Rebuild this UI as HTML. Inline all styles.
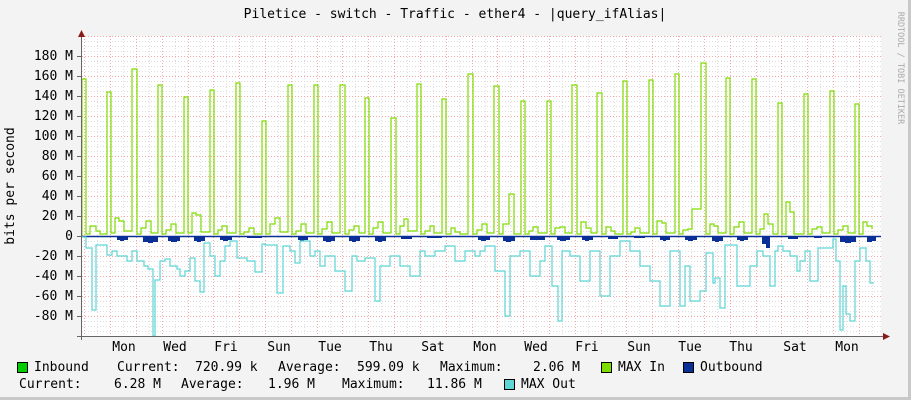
<!DOCTYPE html>
<html><head><meta charset="utf-8"><style>
html,body{margin:0;padding:0;}
body{width:911px;height:400px;overflow:hidden;background:#f3f3f3;position:relative;font-family:"DejaVu Sans Mono","Liberation Mono",monospace;font-size:13px;color:#000;}
.frame{position:absolute;left:0;top:0;width:908px;height:397px;border-right:3px solid #c8c8c8;border-bottom:3px solid #c8c8c8;}
.t{position:absolute;white-space:pre;line-height:14px;}
.sq{position:absolute;width:9px;height:9px;border:1px solid #000;}
</style></head><body>
<div class="frame"></div>
<svg width="911" height="400" style="position:absolute;left:0;top:0" xmlns="http://www.w3.org/2000/svg">
<rect x="82" y="36" width="799" height="300" fill="#fff"/>
<g stroke="#dedede" stroke-width="1" stroke-dasharray="1,2">
<path d="M82,41.5H881M82,46.5H881M82,51.5H881M82,61.5H881M82,66.5H881M82,71.5H881M82,81.5H881M82,86.5H881M82,91.5H881M82,101.5H881M82,106.5H881M82,111.5H881M82,121.5H881M82,126.5H881M82,131.5H881M82,141.5H881M82,146.5H881M82,151.5H881M82,161.5H881M82,166.5H881M82,171.5H881M82,181.5H881M82,186.5H881M82,191.5H881M82,201.5H881M82,206.5H881M82,211.5H881M82,221.5H881M82,226.5H881M82,231.5H881M82,241.5H881M82,246.5H881M82,251.5H881M82,261.5H881M82,266.5H881M82,271.5H881M82,281.5H881M82,286.5H881M82,291.5H881M82,301.5H881M82,306.5H881M82,311.5H881M82,321.5H881M82,326.5H881M82,331.5H881"/>
<path d="M97.5,36V336M123.5,36V336M149.5,36V336M175.5,36V336M200.5,36V336M226.5,36V336M252.5,36V336M278.5,36V336M304.5,36V336M330.5,36V336M355.5,36V336M381.5,36V336M407.5,36V336M433.5,36V336M459.5,36V336M485.5,36V336M510.5,36V336M536.5,36V336M562.5,36V336M588.5,36V336M614.5,36V336M639.5,36V336M665.5,36V336M691.5,36V336M717.5,36V336M743.5,36V336M769.5,36V336M794.5,36V336M820.5,36V336M846.5,36V336M872.5,36V336"/>
</g>
<g stroke="#f4a8a8" stroke-width="1" stroke-dasharray="1,2">
<path d="M82,36.5H881M82,56.5H881M82,76.5H881M82,96.5H881M82,116.5H881M82,136.5H881M82,156.5H881M82,176.5H881M82,196.5H881M82,216.5H881M82,256.5H881M82,276.5H881M82,296.5H881M82,316.5H881"/>
<path d="M84.5,36V336M110.5,36V336M136.5,36V336M162.5,36V336M188.5,36V336M213.5,36V336M239.5,36V336M265.5,36V336M291.5,36V336M317.5,36V336M342.5,36V336M368.5,36V336M394.5,36V336M420.5,36V336M446.5,36V336M472.5,36V336M497.5,36V336M523.5,36V336M549.5,36V336M575.5,36V336M601.5,36V336M626.5,36V336M652.5,36V336M678.5,36V336M704.5,36V336M730.5,36V336M756.5,36V336M781.5,36V336M807.5,36V336M833.5,36V336M859.5,36V336"/>
</g>
<path fill="none" stroke="#7fdc00" stroke-width="1.2" d="M82,236V79H86V234H90V226H96V231H100V234H107V92H111V233H115V218H119V221H124V231H132V69H137V234H141V228H146V221H151V233H158V85H162V234H166V230H171V224H176V233H184V97H188V233H192V213H196V215H201V232H210V90H214V234H218V230H222V226H227V233H236V83H240V234H244V232H249V228H254V234H262V121H266V234H270V224H275V218H280V232H288V85H292V234H296V231H301V224H306V233H314V85H318V234H322V229H327V222H332V233H340V85H345V234H349V230H354V226H359V233H365V98H369V234H373V228H378V222H383V233H391V118H396V234H400V226H404V219H408V231H417V84H421V234H425V231H430V226H434V233H442V99H446V234H451V228H455V232H460V234H468V74H473V234H477V230H482V224H487V233H494V86H499V234H503V224H509V194H514V234H521V101H525V234H529V231H533V227H538V233H547V101H551V234H555V228H560V227H565V233H572V85H577V234H581V222H586V228H591V233H597V93H602V234H606V227H611V231H615V234H623V81H627V234H631V232H635V228H640V233H649V80H653V234H657V221H662V223H666V233H675V74H679V234H683V230H688V229H692V209H696V209H701V63H706V234H710V224H714V226H718V233H726V78H730V234H734V227H739V222H744V233H752V79H756V234H760V229H764V214H768V224H773V234H778V103H782V234H786V202H790V212H794V234H804V94H808V234H812V229H817V227H822V233H830V91H834V234H838V230H843V226H848V233H855V104H859V234H863V222H867V226H872V229"/>
<g fill="#0a2f96">
<path d="M117,236H128V240H124V241H120V240H117Z"/><path d="M143,236H158V242H153V243H148V242H143Z"/><path d="M168,236H180V241H177V242H171V241H168Z"/><path d="M194,236H205V241H201V242H197V241H194Z"/><path d="M220,236H232V240H228V241H223V240H220Z"/><path d="M247,236H262V238H247Z"/><path d="M298,236H308V240H304V241H300V240H298Z"/><path d="M323,236H335V241H331V242H326V241H323Z"/><path d="M349,236H360V241H356V242H352V241H349Z"/><path d="M375,236H386V241H382V242H378V241H375Z"/><path d="M401,236H412V239H401Z"/><path d="M427,236H442V238H427Z"/><path d="M478,236H490V240H486V241H481V240H478Z"/><path d="M503,236H515V241H511V242H506V241H503Z"/><path d="M530,236H545V240H530Z"/><path d="M557,236H570V240H566V241H560V240H557Z"/><path d="M582,236H593V240H589V241H585V240H582Z"/><path d="M608,236H618V239H608Z"/><path d="M634,236H645V238H634Z"/><path d="M660,236H670V240H666V241H663V240H660Z"/><path d="M685,236H697V240H693V241H688V240H685Z"/><path d="M712,236H723V241H719V242H715V241H712Z"/><path d="M737,236H748V240H744V241H740V240H737Z"/><path d="M762,236H770V248H766V244H762Z"/><path d="M788,236H798V239H788Z"/><path d="M814,236H822V238H814Z"/><path d="M840,236H856V242H851V243H845V242H840Z"/><path d="M867,236H876V241H872V242H867Z"/>
</g>
<path d="M82,236.5H881" stroke="#0a2f96" stroke-width="1.5"/>
<path fill="none" stroke="#5ed6d6" stroke-width="1.2" d="M82,237H86V248H92V310H96V245H107V255H112V251H117V256H127V261H132V251H137V261H144V266H148V269H153V336H155V280H160V261H165V259H170V266H177V269H180V276H185V271H190V258H195V281H200V292H204V243H210V256H215V276H220V261H225V246H230V241H237V258H247V261H255V272H262V244H265V245H277V293H283V246H290V251H295V263H300V241H310V256H315V251H320V266H325V256H335V271H345V291H352V256H357V261H365V258H375V301H380V266H390V256H400V266H410V276H420V251H425V256H435V251H445V246H455V261H465V251H475V256H480V251H485V246H495V271H505V316H510V256H520V251H530V276H540V261H545V246H552V286H558V321H562V251H570V256H580V281H590V251H600V296H610V256H620V241H630V251H640V266H650V281H660V306H670V251H680V306H685V266H690V301H700V291H706V253H713V283H715V278H720V308H725V245H737V286H750V266H757V251H763V256H770V286H775V251H778V246H783V251H790V256H797V271H800V261H805V251H810V281H818V248H833V239H836V261H840V330H843V286H846V314H850V321H855V261H860V248H866V261H870V283H874"/>
<path d="M81.5,340V32M77,336.5H884" stroke="#666" stroke-width="1"/>
<path d="M77,56.5H81M77,76.5H81M77,96.5H81M77,116.5H81M77,136.5H81M77,156.5H81M77,176.5H81M77,196.5H81M77,216.5H81M77,236.5H81M77,256.5H81M77,276.5H81M77,296.5H81M77,316.5H81" stroke="#666"/>
<path d="M78,37L81.5,30L85,37Z" fill="#8b1a1a"/>
<path d="M883,333L890,336.5L883,340Z" fill="#8b1a1a"/>
<g font-family="DejaVu Sans Mono, Liberation Mono, monospace" font-size="13" text-anchor="end">
<text x="73" y="60">180 M</text><text x="73" y="80">160 M</text><text x="73" y="100">140 M</text><text x="73" y="120">120 M</text><text x="73" y="140">100 M</text><text x="73" y="160">80 M</text><text x="73" y="180">60 M</text><text x="73" y="200">40 M</text><text x="73" y="220">20 M</text><text x="73" y="240">0</text><text x="73" y="260">-20 M</text><text x="73" y="280">-40 M</text><text x="73" y="300">-60 M</text><text x="73" y="320">-80 M</text>
</g>
<g font-family="DejaVu Sans Mono, Liberation Mono, monospace" font-size="13" text-anchor="middle">
<text x="124" y="351">Mon</text><text x="175" y="351">Wed</text><text x="226" y="351">Fri</text><text x="279" y="351">Sun</text><text x="330" y="351">Tue</text><text x="381" y="351">Thu</text><text x="433" y="351">Sat</text><text x="485" y="351">Mon</text><text x="536" y="351">Wed</text><text x="587" y="351">Fri</text><text x="639" y="351">Sun</text><text x="690" y="351">Tue</text><text x="741" y="351">Thu</text><text x="795" y="351">Sat</text><text x="847" y="351">Mon</text>
<text x="455" y="18">Piletice - switch - Traffic - ether4 - |query_ifAlias|</text>
<text transform="translate(14,186) rotate(-90)">bits per second</text>
</g>
<text transform="translate(898,68) rotate(90)" font-family="DejaVu Sans Mono, monospace" font-size="8.5" fill="#aaa" text-anchor="middle">RRDTOOL / TOBI OETIKER</text>
</svg>
<div class="sq" style="left:17px;top:362px;background:#00cc00"></div>
<div class="t" style="left:34px;top:361px">Inbound</div>
<div class="t" style="left:117px;top:361px">Current:</div>
<div class="t" style="left:195px;top:361px">720.99 k</div>
<div class="t" style="left:278px;top:361px">Average:</div>
<div class="t" style="left:357px;top:361px">599.09 k</div>
<div class="t" style="left:440px;top:361px">Maximum:</div>
<div class="t" style="left:533px;top:361px">2.06 M</div>
<div class="sq" style="left:601px;top:362px;background:#7fdc00"></div>
<div class="t" style="left:618px;top:361px">MAX In</div>
<div class="sq" style="left:683px;top:362px;background:#0a2f96"></div>
<div class="t" style="left:700px;top:361px">Outbound</div>
<div class="t" style="left:19px;top:378px">Current:</div>
<div class="t" style="left:114px;top:378px">6.28 M</div>
<div class="t" style="left:181px;top:378px">Average:</div>
<div class="t" style="left:268px;top:378px">1.96 M</div>
<div class="t" style="left:342px;top:378px">Maximum:</div>
<div class="t" style="left:427px;top:378px">11.86 M</div>
<div class="sq" style="left:504px;top:379px;background:#5ed6d6"></div>
<div class="t" style="left:521px;top:378px">MAX Out</div>
</body></html>
